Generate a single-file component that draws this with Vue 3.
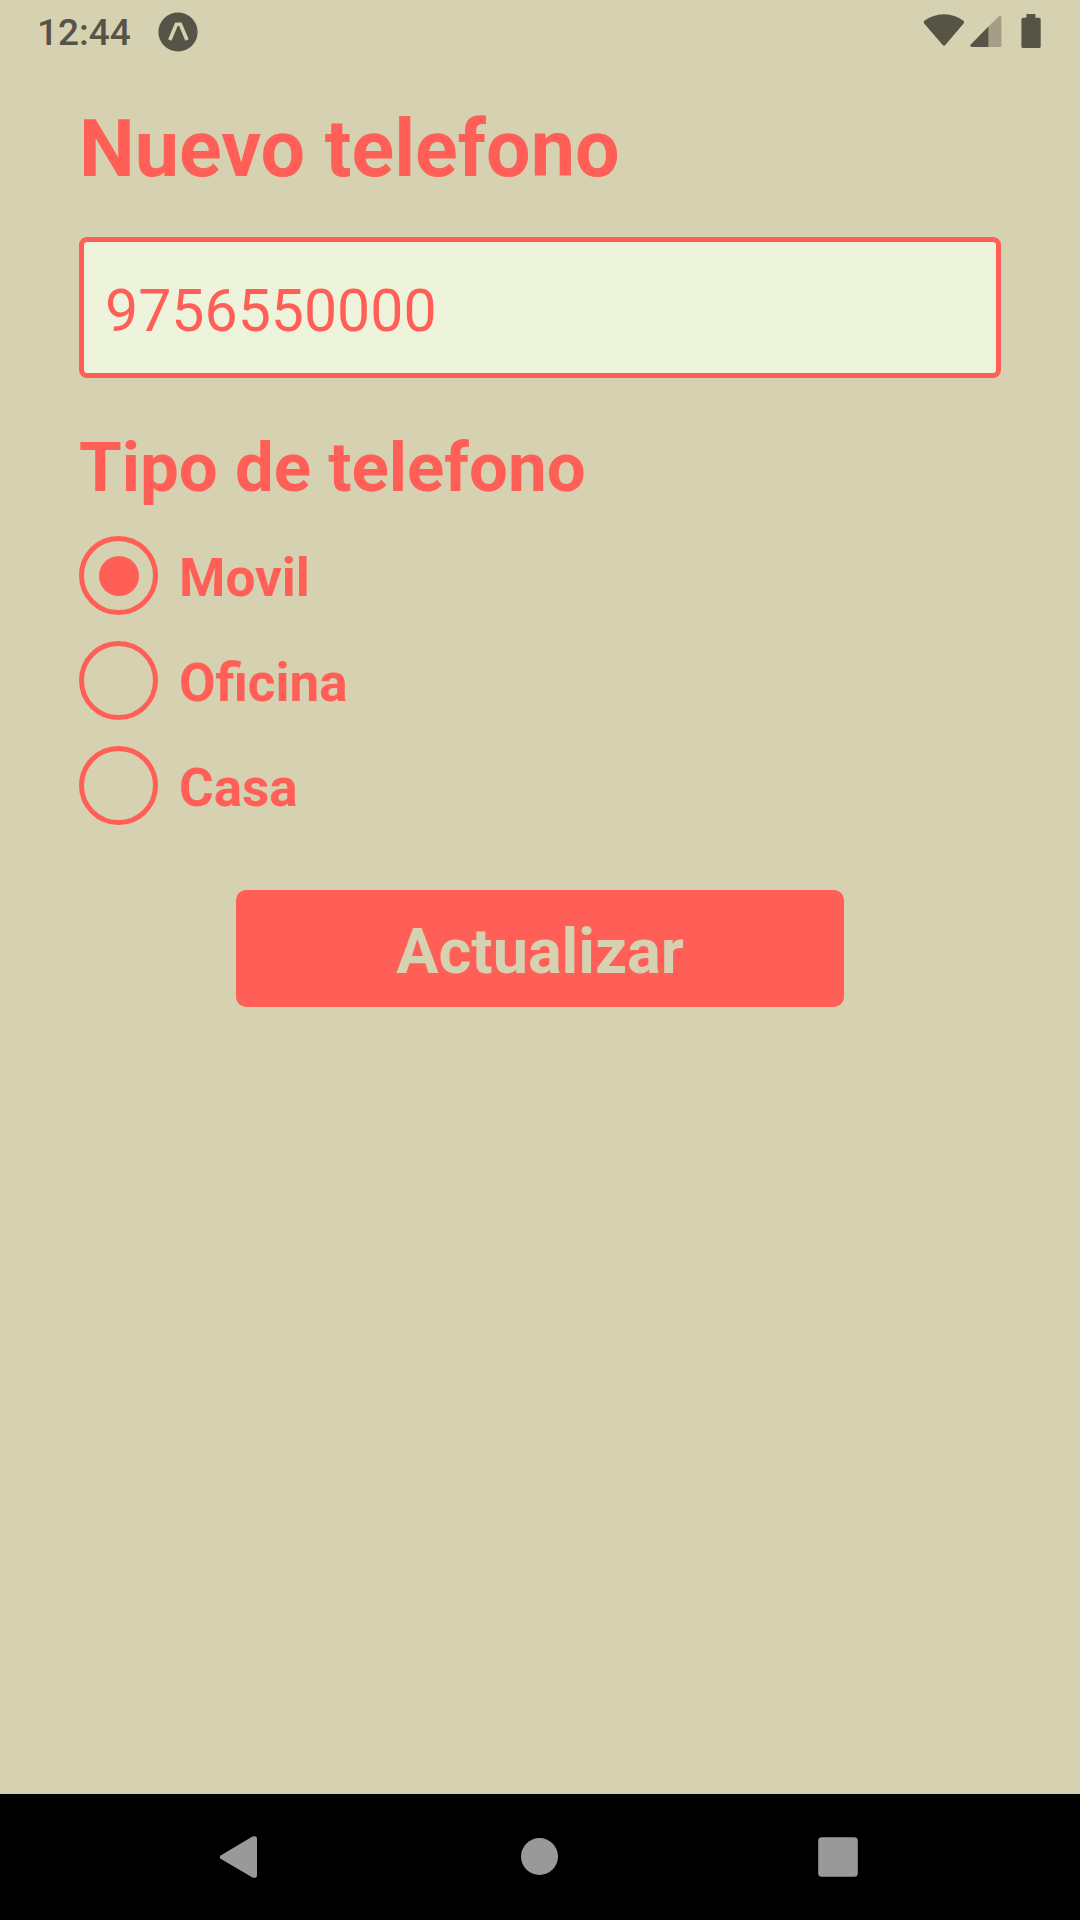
<script setup>
import { ref } from 'vue'

const phone = ref('9756550000')
const kind = ref('Movil')
const kinds = ['Movil', 'Oficina', 'Casa']
</script>

<template>
  <div class="screen">
    <header class="status">
      <div class="status-side">
        <time class="clock">12:44</time>
        <svg class="expo" width="40" height="40" viewBox="0 0 40 40" aria-hidden="true">
          <circle cx="20" cy="20" r="19.6" fill="#565446" />
          <path d="M11.8 28L18.4 12.2H22.4L29 28" fill="none" stroke="#d6d1b1" stroke-width="3.6" />
        </svg>
      </div>
      <div class="status-side icons">
        <svg width="42" height="34" viewBox="0 0 42 34" aria-hidden="true">
          <path d="M1 9.2Q.1 7.8 1.4 6.8Q10 .2 21 .2T40.4 6.8Q41.7 7.8 40.8 9.2L22.3 31Q21 32.3 19.7 31Z" fill="#565446" />
        </svg>
        <svg width="32" height="34" viewBox="0 0 32 34" aria-hidden="true">
          <path d="M18 12.8L29 2.3Q31.4 .8 31.4 3.5V31.4Q31.4 33 29.8 33H18Z" fill="#a39e85" />
          <path d="M18.4 12.6V33H1.5Q-.5 32.6 .8 30.6Z" fill="#565446" />
        </svg>
        <svg class="battery" width="20" height="34" viewBox="0 0 20 34" aria-hidden="true">
          <path d="M5.4 0H14.4V3.8H18Q19.7 3.8 19.7 5.4V32.4Q19.7 34 18 34H2.1Q.4 34 .4 32.4V5.4Q.4 3.8 2.1 3.8H5.4Z" fill="#565446" />
        </svg>
      </div>
    </header>

    <main>
      <form class="form" @submit.prevent>
        <label class="title" for="phone">Nuevo telefono</label>
        <input id="phone" v-model="phone" class="phone" type="tel" />
        <fieldset class="group">
          <legend class="legend">Tipo de telefono</legend>
          <div class="options">
            <label v-for="item in kinds" :key="item" class="option">
              <input v-model="kind" class="radio" type="radio" name="kind" :value="item" />
              <span class="option-text">{{ item }}</span>
            </label>
          </div>
        </fieldset>
        <button class="submit" type="submit">Actualizar</button>
      </form>
    </main>

    <nav class="nav">
      <button class="nav-button" type="button" aria-label="Back">
        <svg width="42" height="42" viewBox="0 0 42 42">
          <path d="M1.6 19.5L33.5 .6Q38 -1 38 3V39Q38 43 33.5 41.4L1.6 22.8Q0 21.2 1.6 19.5Z" fill="#999" />
        </svg>
      </button>
      <button class="nav-button" type="button" aria-label="Home">
        <svg width="42" height="42" viewBox="0 0 42 42">
          <circle cx="20.5" cy="20.5" r="18.5" fill="#999" />
        </svg>
      </button>
      <button class="nav-button" type="button" aria-label="Recents">
        <svg width="42" height="42" viewBox="0 0 42 42">
          <rect x="-.8" y="1.2" width="39.6" height="39.6" rx="3.5" fill="#999" />
        </svg>
      </button>
    </nav>
  </div>
</template>

<style>
body {
  margin: 0;
}
</style>

<style scoped>
.screen {
  display: flex;
  flex-direction: column;
  min-height: 100vh;
  background: #d6d1b1;
  color: #ff5f56;
  font-family: Roboto, "Liberation Sans", sans-serif;
}

.status {
  display: flex;
  align-items: center;
  justify-content: space-between;
  height: 63px;
  padding: 0 39px 0 37px;
  color: #565446;
}

.status-side {
  display: flex;
  align-items: center;
  gap: 27px;
}

.icons {
  gap: 5px;
  padding-bottom: 2px;
}

.battery {
  margin-left: 14px;
}

.clock {
  padding-top: 2px;
  font-size: 37px;
  font-weight: 500;
  line-height: 44px;
}

main {
  flex: 1;
}

svg {
  display: block;
  overflow: visible;
}

.form {
  display: flex;
  flex-direction: column;
  padding: 40px 79px;
}

.title {
  font-size: 79px;
  font-weight: 700;
  line-height: 93px;
}

.phone {
  box-sizing: border-box;
  width: 100%;
  height: 141px;
  margin: 41px 0 49px;
  padding: 5px 21px 0;
  border: 5px solid #ff5f56;
  border-radius: 8px;
  outline: none;
  background: #eef4db;
  color: inherit;
  font-family: inherit;
  font-size: 59px;
}

.group {
  min-width: 0;
  margin: 0;
  padding: 0;
  border: 0;
}

.legend {
  padding: 0;
  font-size: 69px;
  font-weight: 700;
  line-height: 81px;
}

.options {
  display: flex;
  flex-direction: column;
  align-items: flex-start;
  gap: 26px;
  margin-top: 28px;
}

.option {
  display: flex;
  align-items: center;
  gap: 21px;
  font-size: 53px;
  font-weight: 700;
  line-height: 62px;
}

.option-text {
  padding-top: 4px;
}

.radio {
  display: grid;
  place-content: center;
  box-sizing: border-box;
  width: 79px;
  height: 79px;
  margin: 0;
  border: 5px solid #ff5f56;
  border-radius: 50%;
  appearance: none;
}

.radio:checked::before {
  width: 40px;
  height: 40px;
  border-radius: 50%;
  background: #ff5f56;
  content: "";
}

.submit {
  align-self: center;
  width: 66%;
  margin: 65px 0 0;
  padding: 25px 0 18px;
  border: 0;
  border-radius: 10px;
  background: #ff5f56;
  color: #d6d1b1;
  font-family: inherit;
  font-size: 63px;
  font-weight: 700;
  line-height: 74px;
}

.nav {
  display: flex;
  justify-content: center;
  height: 126px;
  padding: 0 8%;
  background: #000;
}

.nav-button {
  display: flex;
  flex: 0 1 300px;
  align-items: center;
  justify-content: center;
  margin: 0;
  padding: 0;
  border: 0;
  background: none;
}
</style>
